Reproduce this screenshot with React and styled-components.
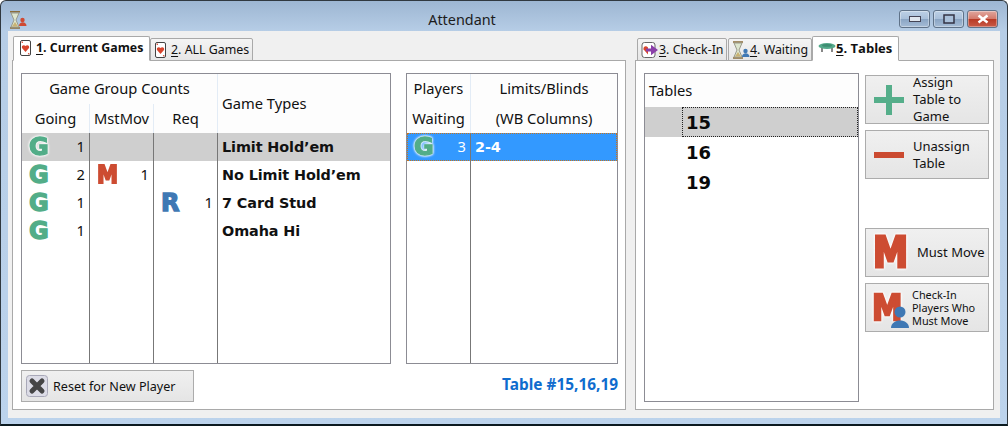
import React from 'react';
import styled, { createGlobalStyle } from 'styled-components';

const Global = createGlobalStyle`
  html, body { margin: 0; padding: 0; background: #fff; }
  body { width: 1008px; height: 426px; overflow: hidden; font-family: "Noto Sans", "DejaVu Sans", sans-serif; font-size: 14.7px; color: #111; }
  svg { flex: none; display: block; }
`;

const Win = styled.div`
  width: 1008px; height: 426px; box-sizing: border-box;
  border: 1px solid #30383f; border-bottom: 2px solid #0b1a20; border-radius: 6px 6px 0 0;
  background: linear-gradient(180deg, #9db6d2 0, #b6cde6 30px, #bcd3ec 100%);
  display: flex; flex-direction: column; padding: 0 7px 6px; overflow: hidden;
`;
const TitleBar = styled.div`
  height: 30px; flex: none; position: relative; display: flex; align-items: center; justify-content: center;
  font-size: 14.4px; color: #1c1c1c; padding: 6px 84px 0 0; box-sizing: border-box;
`;
const TitleIcon = styled.div` position: absolute; left: 1px; top: 10px; `;
const WinBtns = styled.div` position: absolute; right: 2px; top: 9px; display: flex; gap: 3px; `;
const WinBtn = styled.div`
  width: ${p => p.$w}px; height: 18px; box-sizing: border-box; border: 1px solid #5f7288; border-radius: 3px;
  background: ${p => p.$close ? 'linear-gradient(180deg,#e0a79e 0,#d47a6c 48%,#b83a25 52%,#c85a48 100%)' : 'linear-gradient(180deg,#bcd0e6 0,#a9c0da 48%,#8aa5c4 52%,#a5bcd6 100%)'};
  box-shadow: inset 0 0 0 1px rgba(255,255,255,.35);
  display: flex; align-items: center; justify-content: center;
`;
const Client = styled.div`
  flex: 1; background: #f0f0f0; display: flex; gap: 9px; padding: 5px 5px 8px 4px; box-sizing: border-box; min-height: 0;
`;
const Group = styled.div`
  display: flex; flex-direction: column; width: ${p => p.$w}px; flex: none;
`;
const TabRow = styled.div`
  display: flex; align-items: flex-end; height: 25px; flex: none; padding-left: ${p => p.$pad || 1}px; margin-bottom: -1px; position: relative; z-index: 1;
`;
const Tab = styled.div`
  box-sizing: border-box; display: flex; align-items: center; gap: ${p => p.$gap ?? 4}px; width: ${p => p.$w}px;
  height: ${p => p.$on ? 25 : 23}px; border: 1px solid #a9a9a9; margin-right: ${p => p.$mr ?? 0}px;
  border-bottom: ${p => p.$on ? '1px solid #fff' : '1px solid #a9a9a9'};
  border-radius: 2px 2px 0 0; background: ${p => p.$on ? '#fff' : 'linear-gradient(180deg,#f4f4f4,#e6e6e6)'};
  font-weight: ${p => p.$on ? 700 : 400}; font-size: ${p => p.$fs || 12.4}px; padding: 0 0 ${p => p.$on ? 2 : 0}px ${p => p.$pl ?? 4}px; white-space: nowrap;
  ${p => p.$on && 'font-family: "Open Sans", "Noto Sans", sans-serif;'}
  u { text-underline-offset: 2px; }
`;
const Pane = styled.div`
  flex: 1; background: #fff; border: 1px solid #a9a9a9; box-sizing: border-box; min-height: 0; display: flex;
`;
const LeftBody = styled.div`
  flex: 1; display: flex; flex-direction: column; padding: 12px 7px 6px 8px; min-width: 0;
`;
const Grids = styled.div` display: flex; justify-content: space-between; height: 291px; flex: none; `;
const Grid = styled.div`
  width: ${p => p.$w}px; box-sizing: border-box; border: 1px solid #8c8c94; display: flex; flex-direction: column;
`;
const HeadWrap = styled.div`
  display: grid; grid-template-columns: ${p => p.$cols}; grid-template-rows: 30px 29px; background: #fdfdfd; flex: none; height: 59px;
`;
const HCell = styled.div`
  display: flex; align-items: center; justify-content: ${p => p.$left ? 'flex-start' : 'center'};
  ${p => p.$left && 'padding-left: 4px;'} font-size: 14.7px; white-space: nowrap; padding-bottom: 2px; box-sizing: border-box;
  ${p => p.$span && `grid-column: span ${p.$span};`} ${p => p.$rows && `grid-row: span ${p.$rows};`}
  ${p => p.$line && 'border-right: 1px solid #e3ecf6;'}
`;
const Row = styled.div`
  display: grid; grid-template-columns: ${p => p.$cols}; height: 28px; flex: none; box-sizing: border-box;
  background: ${p => p.$sel === 'blue' ? '#3399ff' : p.$sel ? '#cfcfcf' : '#fff'};
  color: ${p => p.$sel === 'blue' ? '#fff' : '#111'};
  ${p => p.$sel === 'blue' && 'outline: 1px dotted #c8741c; outline-offset: -1px;'}
`;
const Filler = styled(Row)` flex: 1; height: auto; `;
const Cell = styled.div`
  display: flex; align-items: center; justify-content: space-between; padding: 0 4px 0 7px; box-sizing: border-box;
  border-right: ${p => p.$last ? 'none' : '1px solid #777'}; min-width: 0;
`;
const Num = styled.span` font-size: 14.7px; margin-left: auto; margin-bottom: 2px; `;
const Name = styled.span`
  font-family: "DejaVu Sans", sans-serif; font-weight: 700; font-size: 14.4px; margin: 0 0 0 -3px; letter-spacing: -.1px; white-space: nowrap;
`;
const Badge = styled.span`
  font-family: "DejaVu Sans", sans-serif; font-weight: 700; font-size: ${p => p.$size || 24}px; line-height: 1;
  color: ${p => p.$c}; -webkit-text-stroke: ${p => p.$stroke || 1.4}px ${p => p.$c}; display: inline-block; flex: none;
  width: ${p => p.$w}px; transform: scaleX(${p => p.$sx || 1}); transform-origin: 0 50%; white-space: nowrap;
  ${p => p.$halo && 'filter: drop-shadow(0 0 1px #fff) drop-shadow(0 0 1px #fff);'}
`;
const Foot = styled.div`
  display: flex; justify-content: space-between; align-items: center; margin-top: 6px; height: 32px; flex: none;
`;
const Btn = styled.div`
  box-sizing: border-box; border: 1px solid #acacac; background: linear-gradient(180deg,#f0f0f0,#e5e5e5);
  display: flex; align-items: center; width: ${p => p.$w || 124}px; height: ${p => p.$h || 49}px; flex: none;
  line-height: ${p => p.$lh || 17}px; font-size: ${p => p.$fs || 13}px; gap: ${p => p.$gap ?? 9}px; padding-left: ${p => p.$pl ?? 8}px;
`;
const TableLabel = styled.div`
  font-family: "Noto Sans", sans-serif; font-weight: 700; color: #0f6cce; font-size: 15.4px; margin-bottom: 3px;
`;
const RightBody = styled.div` flex: 1; display: flex; padding: 12px 5px 7px 8px; gap: 6px; `;
const TableList = styled.div`
  width: 215px; box-sizing: border-box; border: 1px solid #8c8c94; display: flex; flex-direction: column; flex: none;
`;
const TableHead = styled.div`
  height: 33px; flex: none; background: #fdfdfd; padding: 0 0 2px 4px; box-sizing: border-box; display: flex; align-items: center; font-size: 14.7px;
`;
const TableRow = styled.div`
  height: 30px; flex: none; display: flex; background: ${p => p.$sel ? '#cfcfcf' : '#fff'}; padding-left: 37px;
`;
const TableNum = styled.div`
  flex: 1; display: flex; align-items: center; padding-left: 4px; font-family: "DejaVu Sans", sans-serif; font-weight: 700; font-size: 18px; color: #0a0a0a;
  ${p => p.$sel && 'border: 1px dotted #222; padding-left: 3px;'}
`;
const BtnCol = styled.div` display: flex; flex-direction: column; padding-top: 2px; `;
const Gap = styled.div` height: ${p => p.$h}px; flex: none; `;
const Small = styled.span` font-size: 10.9px; line-height: 13px; `;

const Card = () => (
  <svg width="11" height="16" viewBox="0 0 11 16"><rect x=".5" y=".5" width="10" height="15" rx="1.5" fill="#fff" stroke="#444" /><path d="M5.5 12 2 8C1.1 6 3.6 4.2 5.5 6 7.4 4.2 9.9 6 9 8Z" fill="#d8442c" /><circle cx="2.3" cy="2.3" r=".8" fill="#d8442c" /><circle cx="8.7" cy="13.7" r=".8" fill="#d8442c" /></svg>
);
const Hourglass = () => (
  <svg width="18" height="18" viewBox="0 0 18 18"><path d="M1 1h10M1 17h10" stroke="#8a6d3b" strokeWidth="1.5" /><path d="M2 2h8L7 9l3 7H2l3-7Z" fill="#dde6cf" stroke="#9a9a8a" /><path d="M3 15.5h6L6 11Z" fill="#c9b273" /><circle cx="13.5" cy="10" r="2.2" fill="#3f78b4" /><path d="M10 16c0-5 7.5-5 7.5 0Z" fill="#3f78b4" /></svg>
);
const TitleGlass = () => (
  <svg width="18" height="18" viewBox="0 0 18 18"><path d="M1 .8h10M1 17h10" stroke="#8a6d3b" strokeWidth="1.5" /><path d="M2 2h8L7 9l3 7H2l3-7Z" fill="#dde6cf" stroke="#9a9a8a" /><path d="M3 15.5h6L6 11Z" fill="#c9b273" /><circle cx="13.5" cy="9" r="2.2" fill="#cf4a33" /><path d="M10 15c0-5 7.5-5 7.5 0Z" fill="#cf4a33" /></svg>
);
const CheckIn = () => (
  <svg width="18" height="18" viewBox="0 0 18 18"><rect x="1" y="1.5" width="13" height="15" rx="2.5" fill="#fff" stroke="#666" /><path d="M7 13.5 2.6 8.6C1.6 5.8 5 4 7 6.5Z" fill="#d8442c" /><path d="M5 7.5h5V3.8l7 5.2-7 5.2v-3.7H5Z" fill="#8a3fa8" /></svg>
);
const TableIco = () => (
  <svg width="18" height="12" viewBox="0 0 18 12"><path d="M4 6v4M14 6v4" stroke="#555" strokeWidth="1.4" /><ellipse cx="9" cy="4" rx="8.5" ry="3" fill="#54a98a" /><ellipse cx="9" cy="3.4" rx="5" ry="1.4" fill="#3d8d72" /></svg>
);
const Plus = () => (
  <svg width="30" height="30" viewBox="0 0 30 30"><path d="M12 0h6v12h12v6H18v12h-6V18H0v-6h12Z" fill="#55ae8a" /></svg>
);
const Minus = () => (
  <svg width="30" height="6" viewBox="0 0 30 6"><rect width="30" height="6" fill="#cb4a30" /></svg>
);
const XIcon = () => (
  <svg width="22" height="22" viewBox="0 0 22 22"><rect x=".5" y=".5" width="21" height="21" rx="3" fill="#dcdce6" stroke="#a8a8b8" /><path d="M6 6 16 16M16 6 6 16" stroke="#454545" strokeWidth="5" strokeLinecap="round" /></svg>
);
const Person = () => (
  <svg width="18" height="22" viewBox="0 0 18 22"><circle cx="9" cy="6" r="5.5" fill="#3f78b4" /><path d="M0 22c0-10 18-10 18 0Z" fill="#3f78b4" /></svg>
);
const MoverWrap = styled.span` position: relative; display: inline-flex; width: 37px; height: 40px; align-items: center; flex: none; `;
const MoverPerson = styled.span` position: absolute; left: 19px; bottom: 0; display: flex; `;

const G = ({ halo }) => <Badge $c="#52ad88" $halo={halo}>G</Badge>;
const M = () => <Badge $c="#cd4c32" $sx={0.88} $w={22} $stroke={1.8}>M</Badge>;
const R = () => <Badge $c="#3f78b4">R</Badge>;

const C1 = '68px 64px 64px 1fr';
const C2 = '64px 1fr';
const rows = [
  { g: 1, name: 'Limit Hold’em', sel: true },
  { g: 2, m: 1, name: 'No Limit Hold’em' },
  { g: 1, r: 1, name: '7 Card Stud' },
  { g: 1, name: 'Omaha Hi' },
];

export default function App() {
  return (
    <Win>
      <Global />
      <TitleBar>
        <TitleIcon><TitleGlass /></TitleIcon>
        Attendant
        <WinBtns>
          <WinBtn $w={31}><svg width="12" height="6"><rect x=".5" y=".5" width="11" height="5" fill="#dfe6ee" stroke="#445" /></svg></WinBtn>
          <WinBtn $w={31}><svg width="12" height="10"><rect x="1" y="1" width="10" height="8" fill="#a9c0da" stroke="#334" strokeWidth="1.5" /></svg></WinBtn>
          <WinBtn $w={31} $close><svg width="12" height="10"><path d="M1.5 1.5 10.5 8.5M10.5 1.5 1.5 8.5" stroke="#fff" strokeWidth="2.5" /></svg></WinBtn>
        </WinBtns>
      </TitleBar>
      <Client>
        <Group $w={614}>
          <TabRow>
            <Tab $on $w={137} $pl={6} $gap={5}><Card /><span><u>1</u>. Current Games</span></Tab>
            <Tab $w={103} $gap={5}><Card /><span><u>2</u>. ALL Games</span></Tab>
          </TabRow>
          <Pane>
            <LeftBody>
              <Grids>
                <Grid $w={370}>
                  <HeadWrap $cols={C1}>
                    <HCell $span={3} $line>Game Group Counts</HCell>
                    <HCell $rows={2} $left>Game Types</HCell>
                    <HCell $line>Going</HCell>
                    <HCell $line>MstMov</HCell>
                    <HCell $line>Req</HCell>
                  </HeadWrap>
                  {rows.map(r => (
                    <Row key={r.name} $cols={C1} $sel={r.sel}>
                      <Cell><G halo={r.sel} /><Num>{r.g}</Num></Cell>
                      <Cell>{r.m && <><M /><Num>{r.m}</Num></>}</Cell>
                      <Cell>{r.r && <><R /><Num>{r.r}</Num></>}</Cell>
                      <Cell $last><Name>{r.name}</Name></Cell>
                    </Row>
                  ))}
                  <Filler $cols={C1}><Cell /><Cell /><Cell /><Cell $last /></Filler>
                </Grid>
                <Grid $w={212}>
                  <HeadWrap $cols={C2}>
                    <HCell $line>Players</HCell>
                    <HCell>Limits/Blinds</HCell>
                    <HCell $line>Waiting</HCell>
                    <HCell>(WB Columns)</HCell>
                  </HeadWrap>
                  <Row $cols={C2} $sel="blue">
                    <Cell><G halo /><Num>3</Num></Cell>
                    <Cell $last><Name>2-4</Name></Cell>
                  </Row>
                  <Filler $cols={C2}><Cell /><Cell $last /></Filler>
                </Grid>
              </Grids>
              <Foot>
                <Btn $w={173} $h={32} $gap={5} $pl={4} $fs={12.6}><XIcon /><span>Reset for New Player</span></Btn>
                <TableLabel>Table #15,16,19</TableLabel>
              </Foot>
            </LeftBody>
          </Pane>
        </Group>
        <Group $w={359}>
          <TabRow $pad={2}>
            <Tab $w={90} $mr={1} $gap={0} $pl={3}><CheckIn /><span><u>3</u>. Check-In</span></Tab>
            <Tab $w={84} $gap={0} $pl={3}><Hourglass /><span><u>4</u>. Waiting</span></Tab>
            <Tab $on $w={87} $pl={5} $gap={0} $fs={13}><TableIco /><span><u>5</u>. Tables</span></Tab>
          </TabRow>
          <Pane>
            <RightBody>
              <TableList>
                <TableHead>Tables</TableHead>
                <TableRow $sel><TableNum $sel>15</TableNum></TableRow>
                <TableRow><TableNum>16</TableNum></TableRow>
                <TableRow><TableNum>19</TableNum></TableRow>
              </TableList>
              <BtnCol>
                <Btn><Plus /><span>Assign<br />Table to<br />Game</span></Btn>
                <Gap $h={6} />
                <Btn><Minus /><span>Unassign<br />Table</span></Btn>
                <Gap $h={49} />
                <Btn $gap={8} $pl={7}><Badge $c="#cd4c32" $size={42} $sx={0.84} $w={36} $stroke={3} $halo>M</Badge><span>Must Move</span></Btn>
                <Gap $h={6} />
                <Btn $gap={3} $pl={6}>
                  <MoverWrap><Badge $c="#cd4c32" $size={36} $sx={0.85} $w={31} $stroke={2.4} $halo>M</Badge><MoverPerson><Person /></MoverPerson></MoverWrap>
                  <Small>Check-In<br />Players Who<br />Must Move</Small>
                </Btn>
              </BtnCol>
            </RightBody>
          </Pane>
        </Group>
      </Client>
    </Win>
  );
}
